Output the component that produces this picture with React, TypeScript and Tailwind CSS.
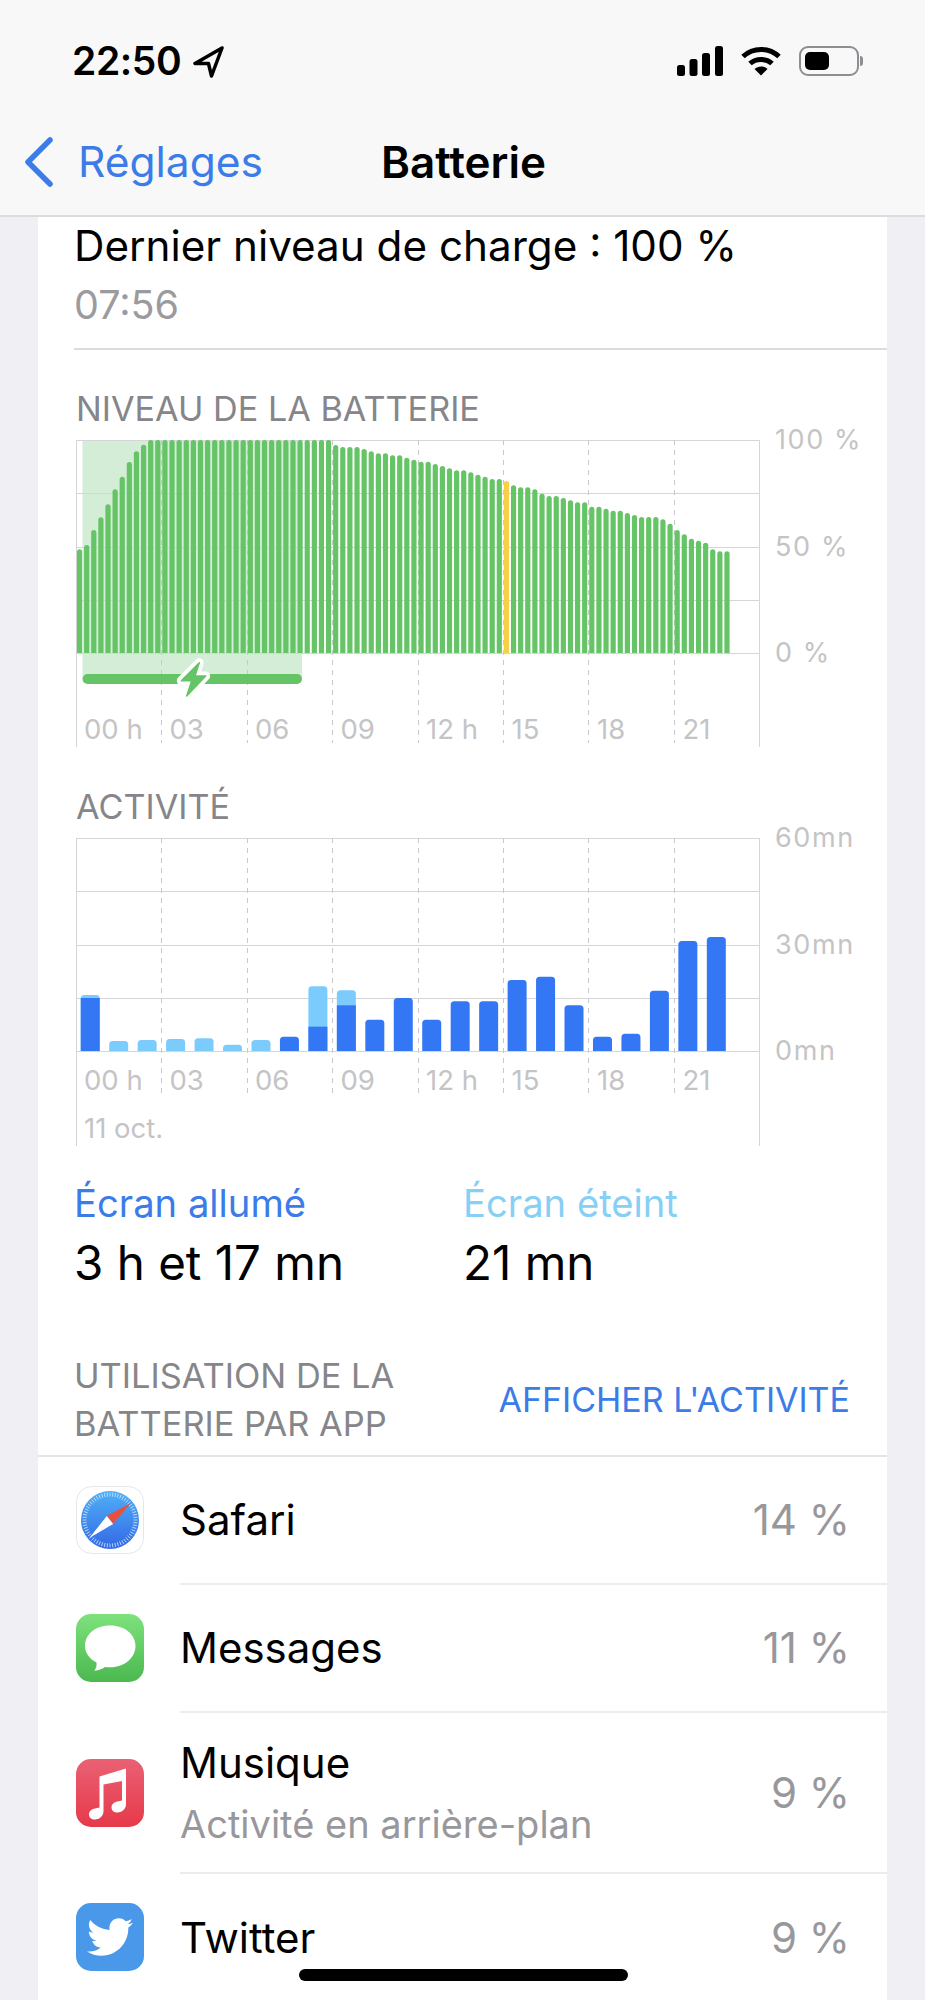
import React from 'react';
import { FaTwitter } from 'react-icons/fa';

// tops of the battery bars, measured at 3x from the reference (790 = 0 %, 150 = 100 %)
const levelTops = [
    478, 465, 420, 382, 343, 298, 260, 216, 184, 164,
    150, 150, 150, 150, 150, 150, 150, 150, 150, 150, 150, 150, 150,
    150, 150, 150, 150, 150, 150, 150, 150, 150, 150, 150, 150, 150,
    165, 171, 171, 171, 177, 184, 190, 190, 196, 196, 203, 209, 215, 215,
    222, 228, 235, 241, 241, 247, 254, 260, 267, 267, 273, 286, 292, 292,
    298, 311, 318, 318, 324, 331, 337, 337, 350, 350, 356, 362, 362, 369,
    375, 381, 381, 381, 388, 401, 420, 433, 446, 452, 458, 478, 484, 484,
];

// [on screen, total] tops, 814 = 0mn
const activity: [number, number][] = [
    [655, 646], [814, 784], [814, 781], [814, 778], [814, 776], [814, 795], [814, 781], [771, 771],
    [741, 620], [677, 632], [720, 720], [655, 655], [720, 720], [665, 665], [665, 665], [601, 601],
    [591, 591], [677, 677], [771, 771], [762, 762], [633, 633], [484, 484], [472, 472],
];

const hours = ['00 h', '03', '06', '09', '12 h', '15', '18', '21'];
const STEP = 683 / 8;

function Grid({ bottom, dashEnd, end }: { bottom: number; dashEnd: number; end: number }) {
    const rows = [0, 1, 2, 3, 4].map(i => Math.round((bottom * i) / 4) + 0.5);
    return (
        <g>
            {rows.map(y => <line key={y} x1="0" x2="683" y1={y} y2={y} stroke="#d6d6d8" strokeWidth="1" />)}
            <line x1="0.5" x2="0.5" y1="0" y2={end} stroke="#d6d6d8" />
            <line x1="683.5" x2="683.5" y1="0" y2={end} stroke="#d6d6d8" />
            {[1, 2, 3, 4, 5, 6, 7].map(i => (
                <line key={i} x1={Math.round(i * STEP) + 0.5} x2={Math.round(i * STEP) + 0.5} y1="0" y2={dashEnd} stroke="#c9c9cb" strokeDasharray="5 5" />
            ))}
        </g>
    );
}

function LevelChart() {
    const bw = 5.2;
    const r = 2.6;
    return (
        <svg className="absolute inset-0" width="690" height="310" viewBox="0 0 690 310">
            <rect x="6.5" y="0" width="219.5" height="239" fill="#d3edd6" />
            <Grid bottom={213} dashEnd={303} end={307} />
            {levelTops.map((top, i) => {
                const x = (i + 0.5) * (683 / 96) - bw / 2;
                const y = (top - 150) / 3;
                const color = i === 60 ? '#f8d048' : '#65c466';
                return (
                    <path
                        key={i}
                        d={`M${x} 213V${y + r}a${r} ${r} 0 0 1 ${r} ${-r}h${bw - 2 * r}a${r} ${r} 0 0 1 ${r} ${r}V213z`}
                        fill={color}
                    />
                );
            })}
            <rect x="6.5" y="234" width="219.5" height="10" rx="5" fill="#65c466" />
            <path d="M123.3 222.7L105.3 240.7H115.7L110.7 256L129.7 236H119z" fill="#fff" stroke="#fff" strokeWidth="9" strokeLinejoin="round" />
            <path d="M123.3 222.7L105.3 240.7H115.7L110.7 256L129.7 236H119z" fill="#65c466" stroke="#65c466" strokeWidth="1.5" strokeLinejoin="round" />
        </svg>
    );
}

function ActivityChart() {
    const bw = 19;
    const step = 683 / 24;
    const bar = (x: number, top: number, r: number) =>
        `M${x} 213V${top + r}a${r} ${r} 0 0 1 ${r} ${-r}h${bw - 2 * r}a${r} ${r} 0 0 1 ${r} ${r}V213z`;
    return (
        <svg className="absolute inset-0" width="690" height="308" viewBox="0 0 690 308">
            <Grid bottom={213} dashEnd={256} end={308} />
            {activity.map(([on, total], i) => {
                const x = (i + 0.5) * step - bw / 2;
                const onY = (on - 814) / 3 + 213;
                const totalY = (total - 814) / 3 + 213;
                return (
                    <g key={i}>
                        {total < on && <path d={bar(x, totalY, 3.5)} fill="#7ccbfd" />}
                        {on < 814 && (total < on
                            ? <rect x={x} y={onY} width={bw} height={213 - onY} fill="#3377f5" />
                            : <path d={bar(x, onY, 3.5)} fill="#3377f5" />)}
                    </g>
                );
            })}
        </svg>
    );
}

function Chart({ title, labels, height, hoursPad, children, date }: { title: string; labels: string[]; height: string; hoursPad: string; children: React.ReactNode; date?: boolean }) {
    return (
        <section>
            <h2 className="h-[36px] pl-[38px] text-[34.2px] leading-[36px] font-normal text-[#86868a] whitespace-nowrap">{title}</h2>
            <div className="mt-[13px] flex pl-[38px]">
                <div className={`relative w-[684px] ${height}`}>
                    {children}
                    <div className={`relative grid grid-cols-8 ${hoursPad} text-[27.5px] leading-[30px] text-[#c4c4c6]`}>
                        {hours.map(h => <span key={h} className="pl-[8px] whitespace-nowrap">{h}</span>)}
                    </div>
                    {date && <p className="relative pl-[8px] pt-[18px] text-[27.5px] leading-[30px] text-[#c4c4c6]">11 oct.</p>}
                </div>
                <div className="-mt-[15px] ml-[15px] flex h-[243px] flex-col justify-between text-[27px] leading-[30px] tracking-[0.06em] text-[#c4c4c6]">
                    {labels.map(l => <span key={l} className="whitespace-nowrap">{l}</span>)}
                </div>
            </div>
        </section>
    );
}

function SafariIcon() {
    const ticks = Array.from({ length: 60 }, (_, i) => i * 6);
    return (
        <svg width="68" height="68" viewBox="0 0 68 68">
            <defs>
                <linearGradient id="safariBg" x1="0" y1="0" x2="0" y2="1">
                    <stop offset="0" stopColor="#4fb0f6" />
                    <stop offset="1" stopColor="#3368e6" />
                </linearGradient>
            </defs>
            <rect x="0.5" y="0.5" width="67" height="67" rx="15" fill="#fff" stroke="#e6e6e8" />
            <circle cx="34" cy="34" r="29" fill="url(#safariBg)" />
            {ticks.map(a => (
                <line key={a} x1="34" y1="6.5" x2="34" y2="10.5" stroke="#cfe6fb" strokeWidth="0.8" transform={`rotate(${a} 34 34)`} />
            ))}
            <path d="M55 16.7L37.2 37.9L30.8 30.1z" fill="#e8503e" />
            <path d="M13.3 52L37.2 37.9L30.8 30.1z" fill="#fff" />
        </svg>
    );
}

function MessagesIcon() {
    return (
        <svg width="68" height="68" viewBox="0 0 68 68">
            <defs>
                <linearGradient id="msgBg" x1="0" y1="0" x2="0" y2="1">
                    <stop offset="0" stopColor="#7ee27c" />
                    <stop offset="1" stopColor="#4bb84f" />
                </linearGradient>
            </defs>
            <rect width="68" height="68" rx="15" fill="url(#msgBg)" />
            <path d="M34 11.500C18.500 11.500 9 21 9 32C9 39 13.500 45 20.500 48.500C21 51.500 20 54.500 18.300 56.700C22.500 56.500 26 55 29 53C30.500 53.200 32.500 53.300 34 53.300C49.500 53.300 59.500 43 59.500 32C59.500 21 49.500 11.500 34 11.500z" fill="#fff" />
        </svg>
    );
}

function MusicIcon() {
    return (
        <svg width="68" height="68" viewBox="0 0 68 68">
            <defs>
                <linearGradient id="musicBg" x1="0" y1="0" x2="0" y2="1">
                    <stop offset="0" stopColor="#ea6174" />
                    <stop offset="1" stopColor="#e6394a" />
                </linearGradient>
            </defs>
            <rect width="68" height="68" rx="15" fill="url(#musicBg)" />
            <path d="M50 9.500V45C50 50.500 45.500 53.500 41.500 53.500C38 53.500 35.500 51.500 35.500 48.500C35.500 45.200 38.300 43.200 41.500 42.500L46 41.500V22L27.500 25.500V52C27.500 57.500 23 60.500 19 60.500C15.500 60.500 13 58.500 13 55.500C13 52.200 15.800 50.200 19 49.500L23.500 48.500V17.500z" fill="#fff" />
        </svg>
    );
}

function AppRow({ icon, name, sub, pct, last }: { icon: React.ReactNode; name: string; sub?: string; pct: string; last?: boolean }) {
    return (
        <div className={`flex pl-[38px] ${sub ? 'h-[161px]' : 'h-[128px]'}`}>
            <div className="flex w-[104px] shrink-0 items-center pb-[2px]">{icon}</div>
            <div className={`flex flex-1 items-center pr-[37px] ${last ? '' : 'border-b-2 border-[#ececee]'}`}>
                <div className="flex-1">
                    <p className="text-[42px] leading-[50px] text-black">{name}</p>
                    {sub && <p className="mt-[13px] text-[38px] leading-[46px] text-[#98989c]">{sub}</p>}
                </div>
                <span className="text-[42px] leading-[50px] text-[#98989c]">{pct}</span>
            </div>
        </div>
    );
}

export default function App() {
    return (
        <div className="relative h-[2000px] overflow-hidden bg-[#efeff4] font-[Inter,sans-serif] text-black">
            {/* status bar + nav */}
            <header className="h-[217px] border-b-2 border-[#dcdcde] bg-[#f8f8f9]">
                <div className="flex h-[138px] items-start pl-[72px] pr-[62px] pt-[40px]">
                    <span className="text-[39px] leading-[42px] font-semibold tracking-[-0.01em]">22:50</span>
                    <svg className="mt-[6px] ml-[12px]" width="32" height="32" viewBox="0 0 32 32" fill="none" stroke="#000" strokeWidth="3.5" strokeLinejoin="round">
                        <path d="M29 2L2 17.500H15.500L18.500 30z" />
                    </svg>
                    <div className="ml-auto flex items-center gap-[18px] pt-[6px]">
                        <svg width="46" height="30" viewBox="0 0 46 30" fill="#000">
                            <rect x="0" y="19" width="8" height="11" rx="2.5" />
                            <rect x="12.5" y="13" width="8" height="17" rx="2.5" />
                            <rect x="25" y="7" width="8" height="23" rx="2.5" />
                            <rect x="38" y="0" width="8" height="30" rx="2.5" />
                        </svg>
                        <svg width="40" height="30" viewBox="0 0 40 30" fill="none" stroke="#000" strokeWidth="5">
                            <path d="M2 10.500C12 1 28 1 38 10.500" />
                            <path d="M9 17.500C15 12 25 12 31 17.500" />
                            <path d="M20 29.500L13.500 23C17 19.500 23 19.500 26.500 23z" fill="#000" stroke="none" />
                        </svg>
                        <div className="flex items-center">
                            <div className="flex h-[30px] w-[60px] rounded-[9px] border-2 border-[#8e8e92] p-[4px]">
                                <div className="h-full w-[24px] rounded-[5px] bg-black" />
                            </div>
                            <div className="ml-[1px] h-[10px] w-[3px] rounded-r-full bg-[#8e8e92]" />
                        </div>
                    </div>
                </div>
                <div className="relative flex h-[48px] items-center pl-[24px]">
                    <svg width="30" height="52" viewBox="0 0 30 52" fill="none" stroke="#3b7ce8" strokeWidth="5.5" strokeLinecap="round" strokeLinejoin="round">
                        <path d="M26 4L4 26L26 48" />
                    </svg>
                    <span className="ml-[24px] text-[42.5px] leading-[48px] text-[#3b7ce8]">Réglages</span>
                    <span className="absolute left-[381px] text-[44px] leading-[48px] font-semibold">Batterie</span>
                </div>
            </header>

            {/* white card */}
            <main className="mx-[38px] h-[1783px] bg-white">
                <div className="ml-[36px] h-[133px] border-b-2 border-[#dcdcde] pt-[5px]">
                    <p className="text-[42.2px] leading-[48px] whitespace-nowrap">Dernier niveau de charge : 100 %</p>
                    <p className="mt-[11px] text-[39.500px] leading-[48px] text-[#9b9b9f]">07:56</p>
                </div>

                <div className="pt-[41px]">
                    <Chart title="NIVEAU DE LA BATTERIE" labels={['100 %', '50 %', '0 %']} height="h-[310px]" hoursPad="pt-[274px]">
                        <LevelChart />
                    </Chart>
                </div>
                <div className="pt-[39px]">
                    <Chart title="ACTIVITÉ" labels={['60mn', '30mn', '0mn']} height="h-[308px]" hoursPad="pt-[227px]" date>
                        <ActivityChart />
                    </Chart>
                </div>

                <div className="flex pl-[36px] pt-[33px]">
                    <div className="w-[389px]">
                        <p className="text-[38.2px] leading-[48px] text-[#3b7ce8]">Écran allumé</p>
                        <p className="mt-[8px] text-[47.5px] leading-[56px]">3 h et 17 mn</p>
                    </div>
                    <div>
                        <p className="text-[38.2px] leading-[48px] text-[#86cff5]">Écran éteint</p>
                        <p className="mt-[8px] text-[47.5px] leading-[56px]">21 mn</p>
                    </div>
                </div>

                <div className="mt-[61px] flex h-[105px] items-center justify-between border-b-2 border-[#e4e4e6] pb-[8px] pl-[36px] pr-[37px]">
                    <h2 className="text-[34.4px] leading-[48px] font-normal text-[#86868a]">UTILISATION DE LA<br />BATTERIE PAR APP</h2>
                    <span className="text-[34px] leading-[48px] text-[#3b7ce8]">AFFICHER L'ACTIVITÉ</span>
                </div>

                <AppRow icon={<SafariIcon />} name="Safari" pct="14 %" />
                <AppRow icon={<MessagesIcon />} name="Messages" pct="11 %" />
                <AppRow icon={<MusicIcon />} name="Musique" sub="Activité en arrière-plan" pct="9 %" />
                <AppRow
                    icon={
                        <div className="flex h-[68px] w-[68px] items-center justify-center rounded-[15px] bg-[#4a98ea]">
                            <FaTwitter className="h-[46px] w-[46px] text-white" />
                        </div>
                    }
                    name="Twitter"
                    pct="9 %"
                    last
                />
            </main>

            {/* home indicator */}
            <div className="absolute bottom-[19px] left-[299px] h-[12px] w-[329px] rounded-full bg-black" />
        </div>
    );
}
